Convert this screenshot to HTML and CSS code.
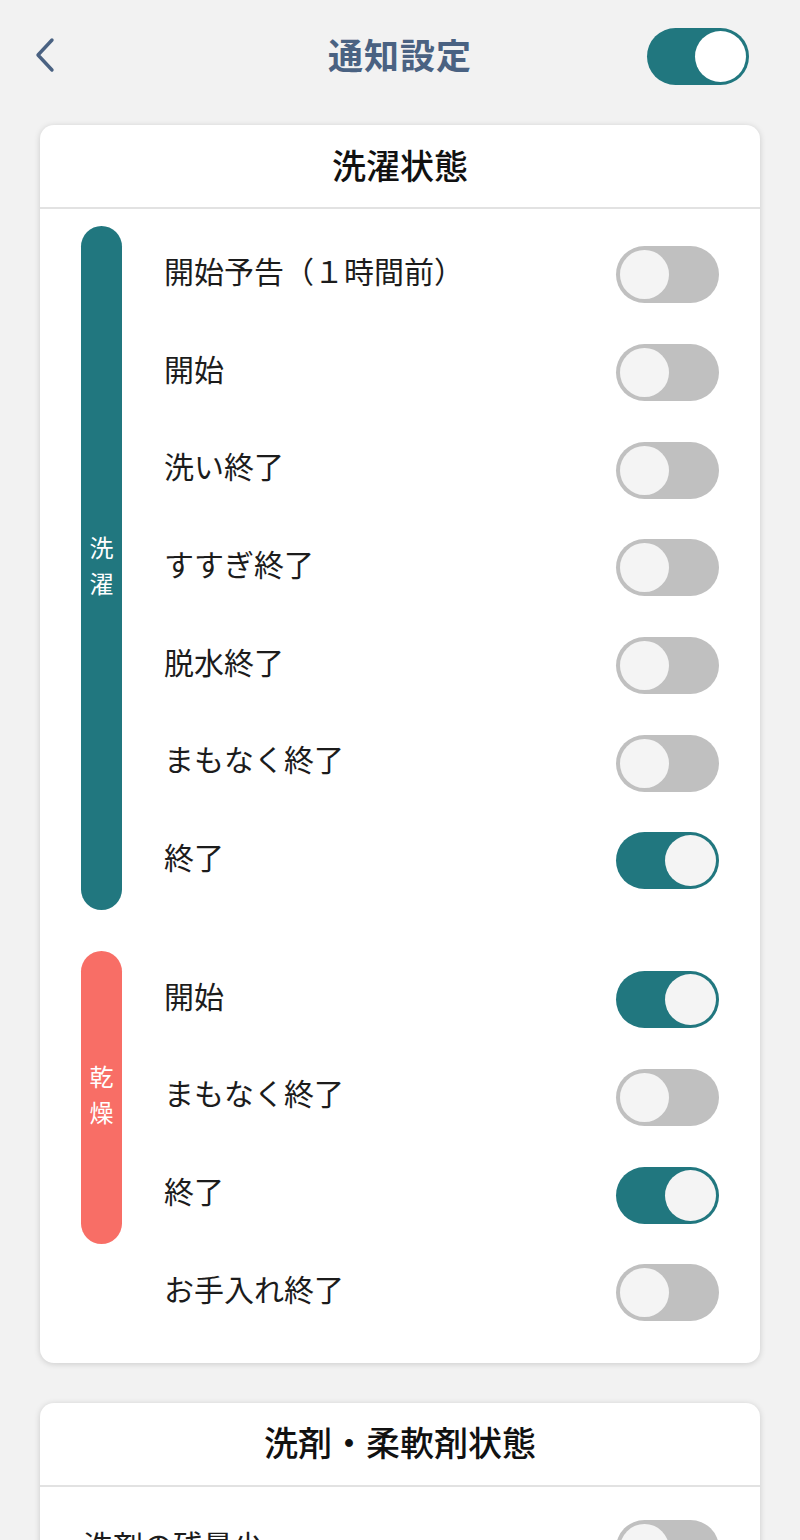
FILE: index.html
```html
<!DOCTYPE html>
<html lang="ja">
<head>
<meta charset="utf-8">
<link rel="stylesheet" href="styles.css">
</head>
<body>
<header class="topbar">
  <div class="back">
    <svg width="24" height="36" viewBox="0 0 24 36"><path d="M19 3 L5 18 L19 33" fill="none" stroke="#4a6282" stroke-width="3.4" stroke-linecap="round" stroke-linejoin="round"/></svg>
  </div>
  <h1 class="title">通知設定</h1>
  <div class="top-right"><span class="toggle toggle-on toggle-big"><span class="knob"></span></span></div>
</header>

<section class="card">
  <div class="card-head">洗濯状態</div>
  <div class="card-body">
    <div class="group">
      <div class="bar bar-wash"><span>洗</span><span>濯</span></div>
      <div class="rows">
        <div class="row"><span class="label">開始予告（１時間前）</span><span class="toggle"><span class="knob"></span></span></div>
        <div class="row"><span class="label">開始</span><span class="toggle"><span class="knob"></span></span></div>
        <div class="row"><span class="label">洗い終了</span><span class="toggle"><span class="knob"></span></span></div>
        <div class="row"><span class="label">すすぎ終了</span><span class="toggle"><span class="knob"></span></span></div>
        <div class="row"><span class="label">脱水終了</span><span class="toggle"><span class="knob"></span></span></div>
        <div class="row"><span class="label">まもなく終了</span><span class="toggle"><span class="knob"></span></span></div>
        <div class="row"><span class="label">終了</span><span class="toggle toggle-on"><span class="knob"></span></span></div>
      </div>
    </div>
    <div class="group">
      <div class="bar bar-dry"><span>乾</span><span>燥</span></div>
      <div class="rows">
        <div class="row"><span class="label">開始</span><span class="toggle toggle-on"><span class="knob"></span></span></div>
        <div class="row"><span class="label">まもなく終了</span><span class="toggle"><span class="knob"></span></span></div>
        <div class="row"><span class="label">終了</span><span class="toggle toggle-on"><span class="knob"></span></span></div>
      </div>
    </div>
    <div class="group group-plain">
      <div class="bar-space"></div>
      <div class="rows">
        <div class="row"><span class="label">お手入れ終了</span><span class="toggle"><span class="knob"></span></span></div>
      </div>
    </div>
  </div>
</section>

<section class="card card-second">
  <div class="card-head">洗剤・柔軟剤状態</div>
  <div class="card-body card-body-plain">
    <div class="row"><span class="label">洗剤の残量少</span><span class="toggle"><span class="knob"></span></span></div>
  </div>
</section>
</body>
</html>
```

FILE: styles.css
```css
* { box-sizing: border-box; }
html, body { margin: 0; padding: 0; }
body {
  background: #f2f2f2;
  font-family: "Noto Sans CJK JP", "Noto Sans", sans-serif;
  color: #1f1f1f;
  width: 800px;
  height: 1540px;
  overflow: hidden;
}
.topbar {
  height: 112px;
  display: grid;
  grid-template-columns: 1fr auto 1fr;
  align-items: center;
  padding: 0 51px;
}
.back { display: flex; align-items: center; margin-left: -18px; margin-top: -2px; }
.title {
  margin: -6px 0 0;
  font-size: 35px;
  font-weight: 700;
  color: #4a6282;
  letter-spacing: 1px;
  line-height: 1;
}
.top-right { display: flex; justify-content: flex-end; }

.card {
  margin: 13px 40px 0;
  background: #fff;
  border-radius: 14px;
  box-shadow: 0 1px 6px rgba(0,0,0,0.16);
  overflow: hidden;
}
.card-second { margin-top: 40px; }
.card-head {
  height: 84px;
  display: flex;
  align-items: center;
  justify-content: center;
  font-size: 34px;
  font-weight: 500;
  color: #111;
  border-bottom: 2px solid #e2e2e2;
  padding-bottom: 4px;
}
.card-body { padding: 17px 41px 21px 41px; display: flex; flex-direction: column; gap: 41px; }
.card-body-plain { padding: 0 41px 0 43px; display: block; }
.card-body-plain .row { height: 114px; padding-top: 10px; }

.group { display: flex; }
.group-plain { margin-top: -41px; }
.bar, .bar-space { width: 41px; flex: none; }
.bar {
  border-radius: 21px;
  display: flex;
  flex-direction: column;
  align-items: center;
  justify-content: center;
  color: #fff;
  font-size: 24px;
  line-height: 36px;
  padding-bottom: 6px;
}
.bar-wash { background: #21777f; }
.bar-dry { background: #f86e66; }
.rows { flex: 1; margin-left: 42px; }
.row {
  height: 97.7px;
  display: flex;
  align-items: center;
  justify-content: space-between;
}
.label { font-size: 30px; color: #1c1c1c; margin-top: -10px; }

.toggle {
  position: relative;
  width: 103px;
  height: 57px;
  border-radius: 29px;
  background: #c0c0c0;
  display: inline-block;
  flex: none;
}
.toggle .knob {
  position: absolute;
  top: 4px;
  left: 4px;
  width: 49px;
  height: 49px;
  border-radius: 50%;
  background: #f4f4f4;
}
.toggle-on { background: #21777f; }
.toggle-on .knob { left: auto; right: 3px; top: 3px; width: 51px; height: 51px; }
.toggle-big { width: 102px; }
.toggle-big .knob { background: #fff; }
```
